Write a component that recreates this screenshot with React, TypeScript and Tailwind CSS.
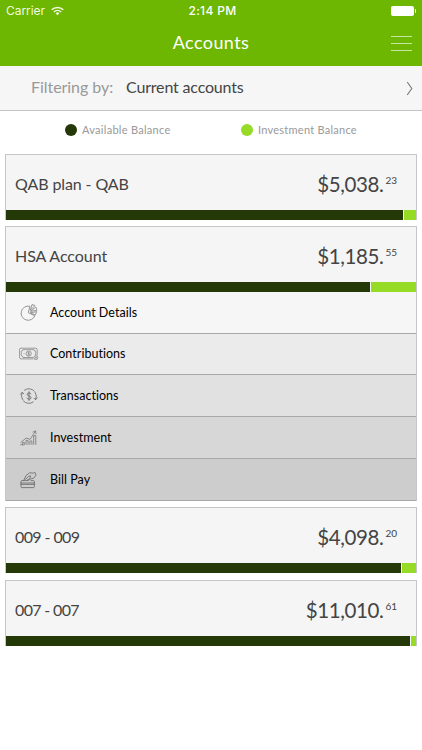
import type { ReactNode } from "react";

function PieIcon() {
  return (
    <svg width="20" height="20" viewBox="0 0 20 20" fill="none" stroke="#8a8a8a" strokeWidth="0.9" strokeLinejoin="round" strokeLinecap="round">
      <path d="M10.6 3.2A7.1 7.1 0 1 0 15.8 12.8L9.6 9.8Z" />
      <path d="M11.4 7l1.6-5.4 2.6.8Z" />
      <path d="M11.8 8.2l5-4.2 1 2.8Z" />
      <path d="M11.6 9.8l6.2-1.2-1.4 3Z" />
    </svg>
  );
}

function BillIcon() {
  return (
    <svg width="20" height="20" viewBox="0 0 20 20" fill="none" stroke="#858585" strokeWidth="0.8">
      <path d="M14.4 14.9H2.2a1.8 1.8 0 0 1-1.8-1.8V5.7a1.5 1.5 0 0 1 1.5-1.5h14.6a1.7 1.7 0 0 1 1.7 1.7v5.4" />
      <path d="M14 13.5H4a1.8 1.8 0 0 0-1.8-1.8V7.2a1.6 1.6 0 0 0 1.6-1.5h11.3a1.6 1.6 0 0 0 1.6 1.6v3.9" />
      <circle cx="9.7" cy="9.6" r="2.6" />
      <path d="M10.7 8.6c-.5-.5-2-.5-2 .3 0 1 2 .5 2 1.5 0 .8-1.5.8-2 .2M9.7 7.8v3.6" strokeWidth="0.7" />
      <circle cx="16.8" cy="13.6" r="2" />
      <path d="M16.8 12.6v2M15.8 13.6h2" strokeWidth="0.7" />
      <path d="M4.6 9.6h.9" />
    </svg>
  );
}

function TransferIcon() {
  return (
    <svg width="20" height="20" viewBox="0 0 20 20" fill="none" stroke="#737373" strokeWidth="0.9" strokeLinecap="round">
      <path d="M5.4 4.2A7.2 7.2 0 0 1 15.4 5.2M14.2 16A7.2 7.2 0 0 1 4.4 15" />
      <path d="M3.7 13.8A7.2 7.2 0 0 1 3.2 6.4M1.6 8.2l1.6-2 1.6 1.6M16.2 6.4a7.2 7.2 0 0 1 .4 7.2M18.2 11.8l-1.6 2-1.6-1.6" />
      <path d="M12 7.7c-.7-1.2-3.9-1.2-3.9.6 0 2.1 4 1.2 4 3.4 0 1.9-3.4 1.9-4.2.5M10 5.7v8.8" strokeWidth="1" />
    </svg>
  );
}

function GrowthIcon() {
  return (
    <svg width="20" height="20" viewBox="0 0 20 20" fill="none" stroke="#808080" strokeWidth="0.9" strokeLinejoin="round">
      <path d="M3.4 16.8v-2.4h1.9v2.4M7 16.8v-4.4h2v4.4M10.9 16.8V13h2v3.8M14.7 16.8V7.6h2.1v9.2" />
      <path d="M1.6 14.6l5.6-4.6 3.9 1.4 5.3-8.2M13.6 4.2l3-1.4.4 3.3M1.4 16.8h4" />
    </svg>
  );
}

function PayIcon() {
  return (
    <svg width="20" height="20" viewBox="0 0 20 20" fill="none" stroke="#707070" strokeWidth="0.9" strokeLinejoin="round" strokeLinecap="round">
      <path d="M5 10.6H3a1 1 0 0 0-1 1v5a1 1 0 0 0 1 1h11.4a1 1 0 0 0 1-1v-5a1 1 0 0 0-1-1H12M2 13h13.4M2 14.4h13.4" />
      <path d="M4.8 10.4l2-4.6 3.8-3 3.8.3 1.4-.9 1.2 3-2.3 3-3.4.9-1.8 1.3H4.8" />
      <path d="M6.6 9.2l3-2.9 2.2-.3-1.2 2.6-2.5 1.8" />
    </svg>
  );
}

type Account = { name: string; whole: string; cents: string; available: string; tracking: string };

function AccountCard({ account, children }: { account: Account; children?: ReactNode }) {
  return (
    <section className="border-x border-t border-[#c6c6c6] bg-[#f5f5f5]">
      <div className="flex h-[55px] items-center justify-between pr-[19px] pl-[9px] text-[#444]">
        <h2 className={`pt-[3px] text-[16px] ${account.tracking}`}>{account.name}</h2>
        <p className="flex items-start pt-[2px] leading-[26px]">
          <span className="text-[20.5px] tracking-[-0.4px]">{account.whole}</span>
          <span className="pl-[2px] text-[10px] leading-[18px]">{account.cents}</span>
        </p>
      </div>
      <div className="flex h-[10px] gap-px bg-[#f5f5f5]">
        <div className={`${account.available} bg-[#243808]`} />
        <div className="flex-1 bg-[#96db26]" />
      </div>
      {children}
    </section>
  );
}

const menu = [
  { label: "Account Details", icon: <PieIcon />, row: "h-[42px] bg-[#f6f6f6]" },
  { label: "Contributions", icon: <BillIcon />, row: "h-[41px] bg-[#ebebeb]" },
  { label: "Transactions", icon: <TransferIcon />, row: "h-[42px] bg-[#e1e1e1]" },
  { label: "Investment", icon: <GrowthIcon />, row: "h-[42px] bg-[#d7d7d7]" },
  { label: "Bill Pay", icon: <PayIcon />, row: "h-[42px] bg-[#cdcdcd]" },
];

const accounts: Account[] = [
  { name: "QAB plan - QAB", whole: "$5,038.", cents: "23", available: "w-[397px]", tracking: "tracking-[-0.1px]" },
  { name: "HSA Account", whole: "$1,185.", cents: "55", available: "w-[364px]", tracking: "tracking-[-0.05px]" },
  { name: "009 - 009", whole: "$4,098.", cents: "20", available: "w-[395px]", tracking: "tracking-[-0.6px]" },
  { name: "007 - 007", whole: "$11,010.", cents: "61", available: "w-[404px]", tracking: "tracking-[-0.65px]" },
];

export default function App() {
  return (
    <main className="h-[750px] w-[422px] overflow-hidden bg-white font-['Lato',sans-serif]">
      <header className="h-[66px] bg-[#6db602] text-white">
        <div className="grid h-[22px] grid-cols-3 items-center pr-[6px] pl-[6px] font-['Inter',sans-serif] text-[12px]">
          <div className="flex items-center gap-[6px] text-[#f1fadf]">
            <span className="tracking-[-0.05px]">Carrier</span>
            <svg width="13" height="10" viewBox="0 0 13 10" fill="none" stroke="#f1fadf" strokeWidth="1.6">
              <path d="M.7 3.8a8.3 8.3 0 0 1 11.6 0M2.9 6a5.2 5.2 0 0 1 7.2 0" />
              <path d="M6.5 9.2L4.6 7.3a2.7 2.7 0 0 1 3.8 0Z" fill="#f1fadf" stroke="none" />
            </svg>
          </div>
          <span className="pl-[3px] text-center font-medium tracking-[0.35px]">2:14 PM</span>
          <div className="flex items-center justify-end gap-px">
            <div className="h-[10px] w-[23px] rounded-[2px] bg-white" />
            <div className="h-1 w-px rounded-r bg-white" />
          </div>
        </div>
        <div className="grid h-[42px] grid-cols-[1fr_auto_1fr] items-center px-[10px]">
          <span />
          <h1 className="pb-[2px] text-[18px] tracking-[0.4px]">Accounts</h1>
          <div className="flex flex-col items-end gap-[6px]">
            <div className="h-px w-[21px] bg-[#c9e6a0]" />
            <div className="h-px w-[21px] bg-[#c9e6a0]" />
            <div className="h-px w-[21px] bg-[#c9e6a0]" />
          </div>
        </div>
      </header>
      <div className="flex h-[45px] items-center border-b border-[#c4c4c4] bg-[#f6f6f6] pr-[9px] pl-[31px] text-[16px]">
        <span className="w-[95px] pb-[2px] tracking-[-0.05px] text-[#999]">Filtering by:</span>
        <span className="flex-1 pb-[2px] tracking-[-0.17px] text-[#444]">Current accounts</span>
        <svg width="7" height="15" viewBox="0 0 7 15" className="mt-px" fill="none" stroke="#777" strokeWidth="1.1">
          <path d="M1.2 1L5.8 7.5 1.2 14" />
        </svg>
      </div>
      <div className="flex h-[43px] items-center pb-[6px] pl-[65px] text-[11px] text-[#999]">
        <div className="flex w-[176px] items-center gap-[5px]">
          <span className="size-3 rounded-full bg-[#243808]" />
          <span className="pt-px tracking-[0.28px]">Available Balance</span>
        </div>
        <div className="flex items-center gap-[5px]">
          <span className="size-3 rounded-full bg-[#96db26]" />
          <span className="pt-px tracking-[0.25px]">Investment Balance</span>
        </div>
      </div>
      <div className="mx-[5px] flex flex-col">
        <AccountCard account={accounts[0]} />
        <div className="h-[6px]" />
        <AccountCard account={accounts[1]}>
          <ul>
            {menu.map((item) => (
              <li key={item.label} className={`flex items-center border-b border-[#a8a8a8] pl-[13px] text-[12.5px] text-black ${item.row}`}>
                <span className="w-[31px]">{item.icon}</span>
                <span className="pt-px tracking-[0.03px]">{item.label}</span>
              </li>
            ))}
          </ul>
        </AccountCard>
        <div className="h-[6px]" />
        <AccountCard account={accounts[2]} />
        <div className="h-[7px]" />
        <AccountCard account={accounts[3]} />
      </div>
    </main>
  );
}
